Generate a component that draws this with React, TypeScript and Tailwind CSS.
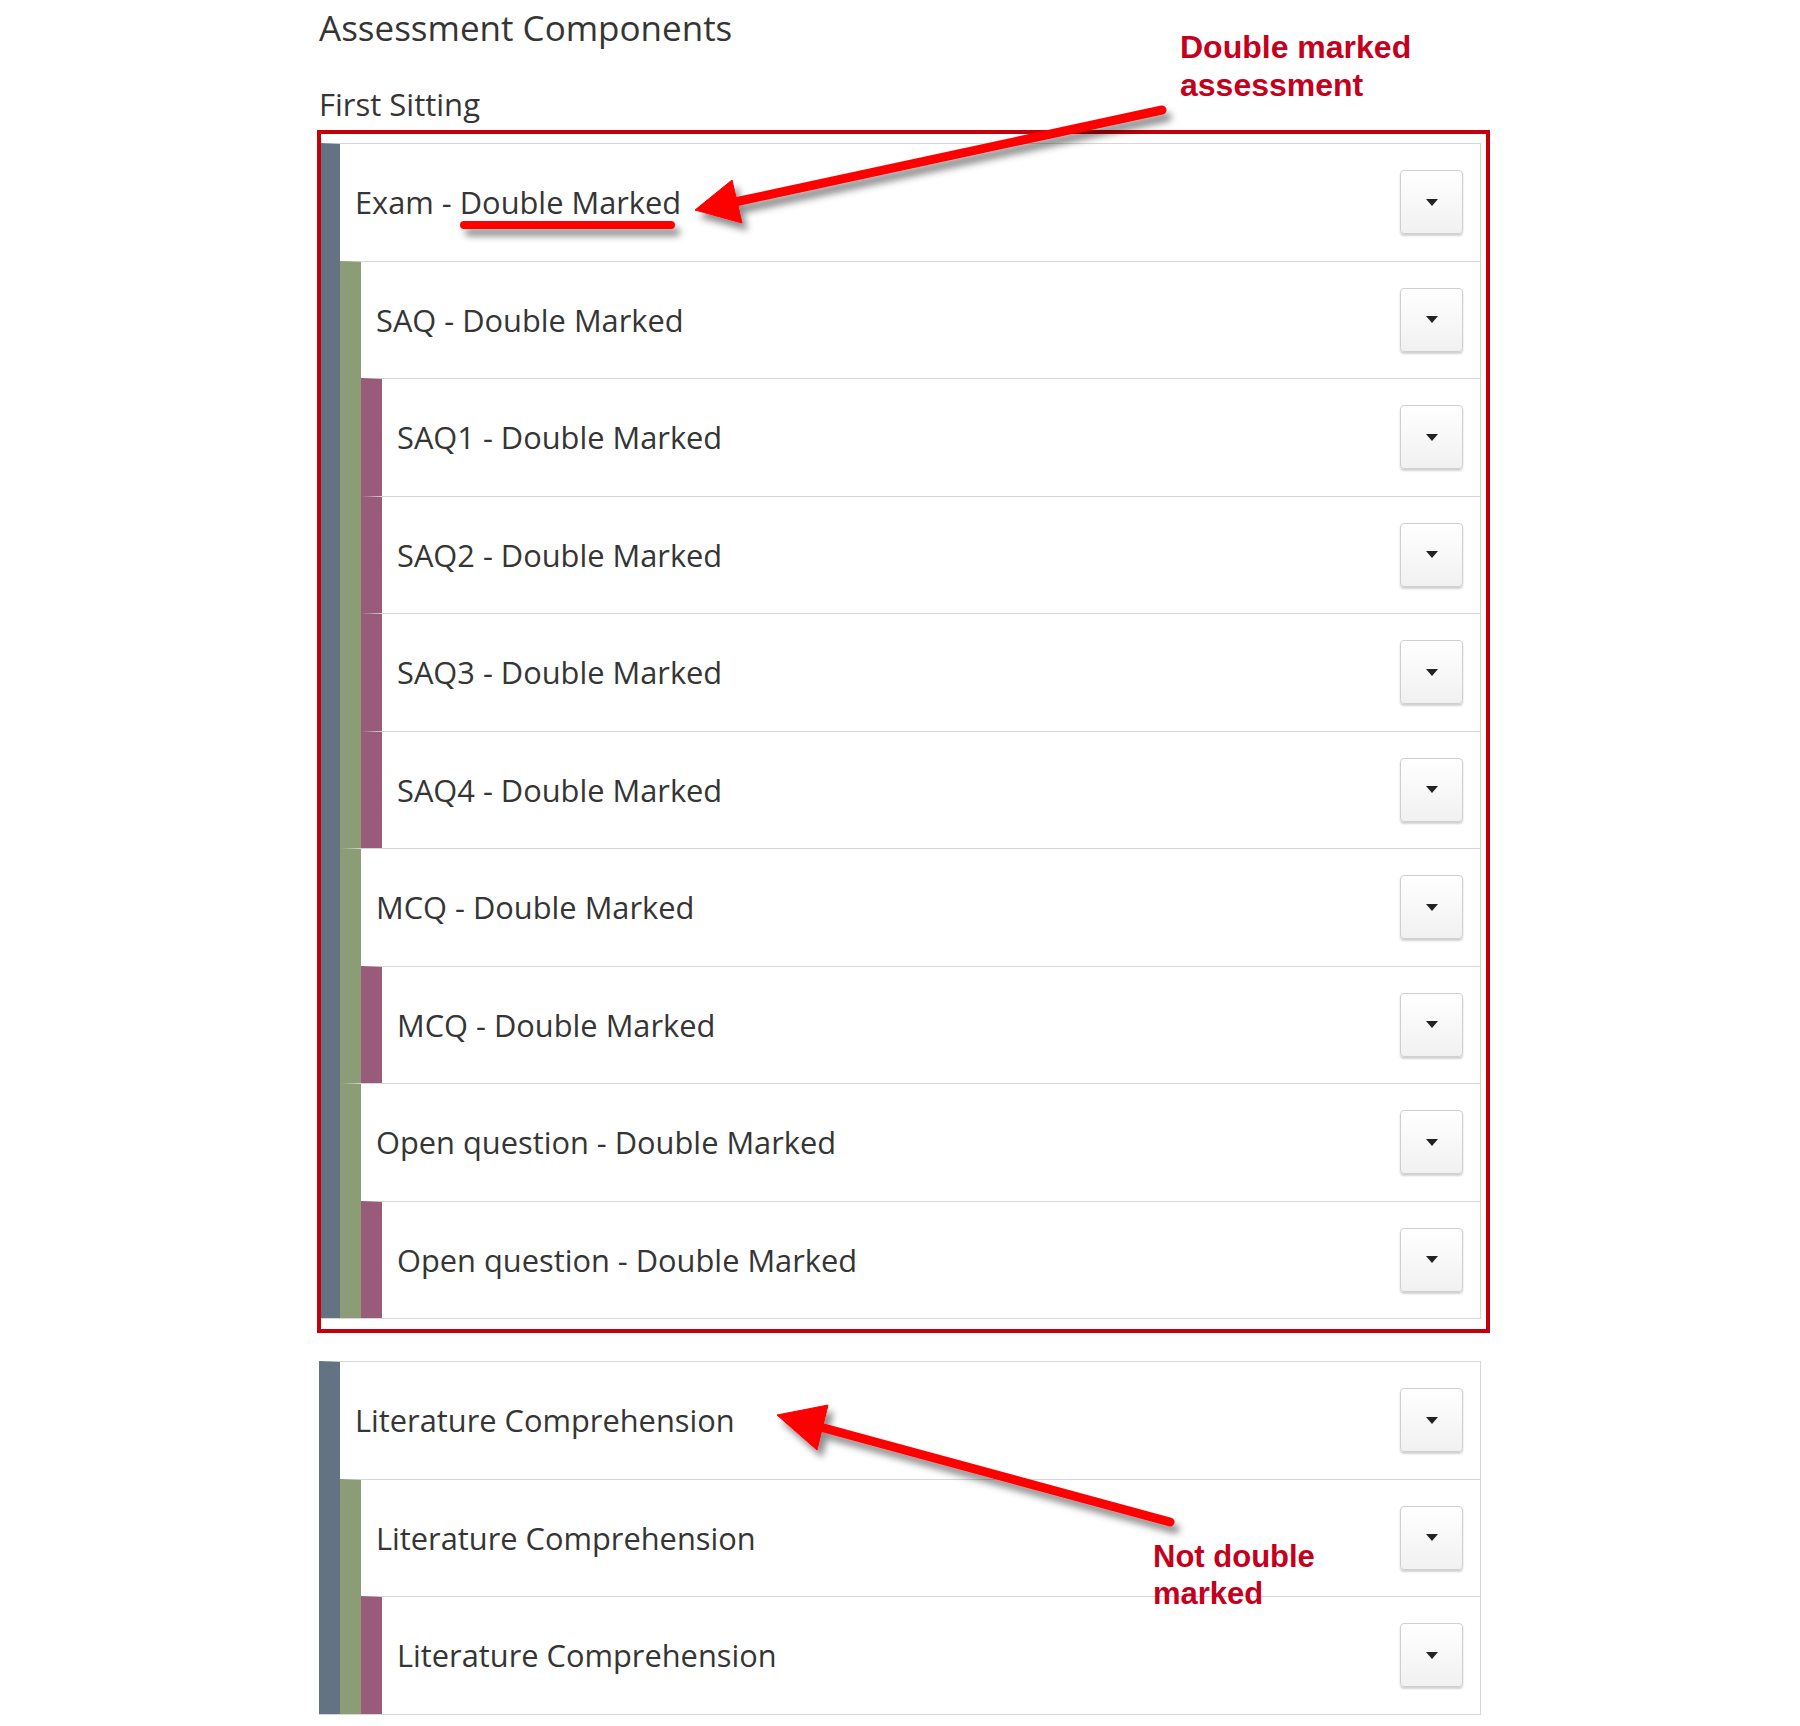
import React from "react";

type Node = { label: string; children?: Node[] };

const barColors = [
  "border-l-[#637384]",
  "border-l-[#8b9c77]",
  "border-l-[#985b7a]",
];

function CaretButton() {
  return (
    <div className="flex h-[64px] w-[63px] shrink-0 items-center justify-center rounded-[4px] border border-[#cfcfcf] bg-gradient-to-b from-white to-[#f1f1f1] shadow-[0_2px_2px_rgba(0,0,0,0.18)]">
      <div className="h-0 w-0 border-x-[6.5px] border-t-[7px] border-x-transparent border-t-[#222]" />
    </div>
  );
}

function Item({ node, level }: { node: Node; level: number }) {
  return (
    <div
      className={`border-l-[21px] border-t border-t-[#d6d6d6] ${barColors[level]}`}
    >
      <div className="flex h-[116.5px] items-center justify-between pl-[15px] pr-[17px]">
        <span className="text-[30.8px] leading-[42px] text-[#353535]">
          {node.label}
        </span>
        <CaretButton />
      </div>
      {node.children?.map((c, i) => (
        <Item key={i} node={c} level={level + 1} />
      ))}
    </div>
  );
}

const exam: Node = {
  label: "Exam - Double Marked",
  children: [
    {
      label: "SAQ - Double Marked",
      children: [
        { label: "SAQ1 - Double Marked" },
        { label: "SAQ2 - Double Marked" },
        { label: "SAQ3 - Double Marked" },
        { label: "SAQ4 - Double Marked" },
      ],
    },
    {
      label: "MCQ - Double Marked",
      children: [{ label: "MCQ - Double Marked" }],
    },
    {
      label: "Open question - Double Marked",
      children: [{ label: "Open question - Double Marked" }],
    },
  ],
};

const lit: Node = {
  label: "Literature Comprehension",
  children: [
    {
      label: "Literature Comprehension",
      children: [{ label: "Literature Comprehension" }],
    },
  ],
};

export default function App() {
  return (
    <div className="relative h-[1726px] w-[1800px] overflow-hidden bg-white font-['Open_Sans',sans-serif]">
      <div className="ml-[319px] w-[1162px] pt-[4px]">
        <h1 className="text-[35px] font-normal leading-[48px] text-[#353535]">
          Assessment Components
        </h1>
        <h2 className="mt-[31px] text-[31px] font-normal leading-[42px] text-[#353535]">
          First Sitting
        </h2>

        <div className="relative mt-[18px]">
          <div className="border-b border-r border-[#d6d6d6]">
            <Item node={exam} level={0} />
          </div>
          <div className="pointer-events-none absolute -bottom-[14px] -left-[2px] -right-[9px] -top-[13px] border-4 border-[#c3000b]" />
        </div>

        <div className="mt-[42px] border-b border-r border-[#d6d6d6]">
          <Item node={lit} level={0} />
        </div>
      </div>

      <div className="absolute left-[1180px] top-[28px] font-['Liberation_Sans',Arial,sans-serif] text-[32px] font-bold leading-[38px] text-[#c5001d]">
        Double marked
        <br />
        assessment
      </div>

      <div className="absolute left-[1153px] top-[1538px] font-['Liberation_Sans',Arial,sans-serif] text-[31px] font-bold leading-[37px] text-[#c5001d]">
        Not double
        <br />
        marked
      </div>

      <svg
        className="pointer-events-none absolute left-0 top-0"
        width="1800"
        height="1726"
        viewBox="0 0 1800 1726"
      >
        <defs>
          <filter id="sh" x="-20%" y="-50%" width="140%" height="200%">
            <feDropShadow
              dx="5"
              dy="7"
              stdDeviation="3.5"
              floodColor="#000"
              floodOpacity="0.45"
            />
          </filter>
        </defs>
        <g filter="url(#sh)" fill="#ff0000" stroke="#ff0000">
          <line
            x1="464"
            y1="225"
            x2="671"
            y2="225"
            strokeWidth="8"
            strokeLinecap="round"
          />
          <line
            x1="735"
            y1="202"
            x2="1162"
            y2="110"
            strokeWidth="9"
            strokeLinecap="round"
          />
          <polygon points="695,210 732,180 742,223" strokeWidth="1" />
          <line
            x1="820"
            y1="1427"
            x2="1170"
            y2="1522"
            strokeWidth="9"
            strokeLinecap="round"
          />
          <polygon points="777,1415 828,1405 817,1450" strokeWidth="1" />
        </g>
      </svg>
    </div>
  );
}
